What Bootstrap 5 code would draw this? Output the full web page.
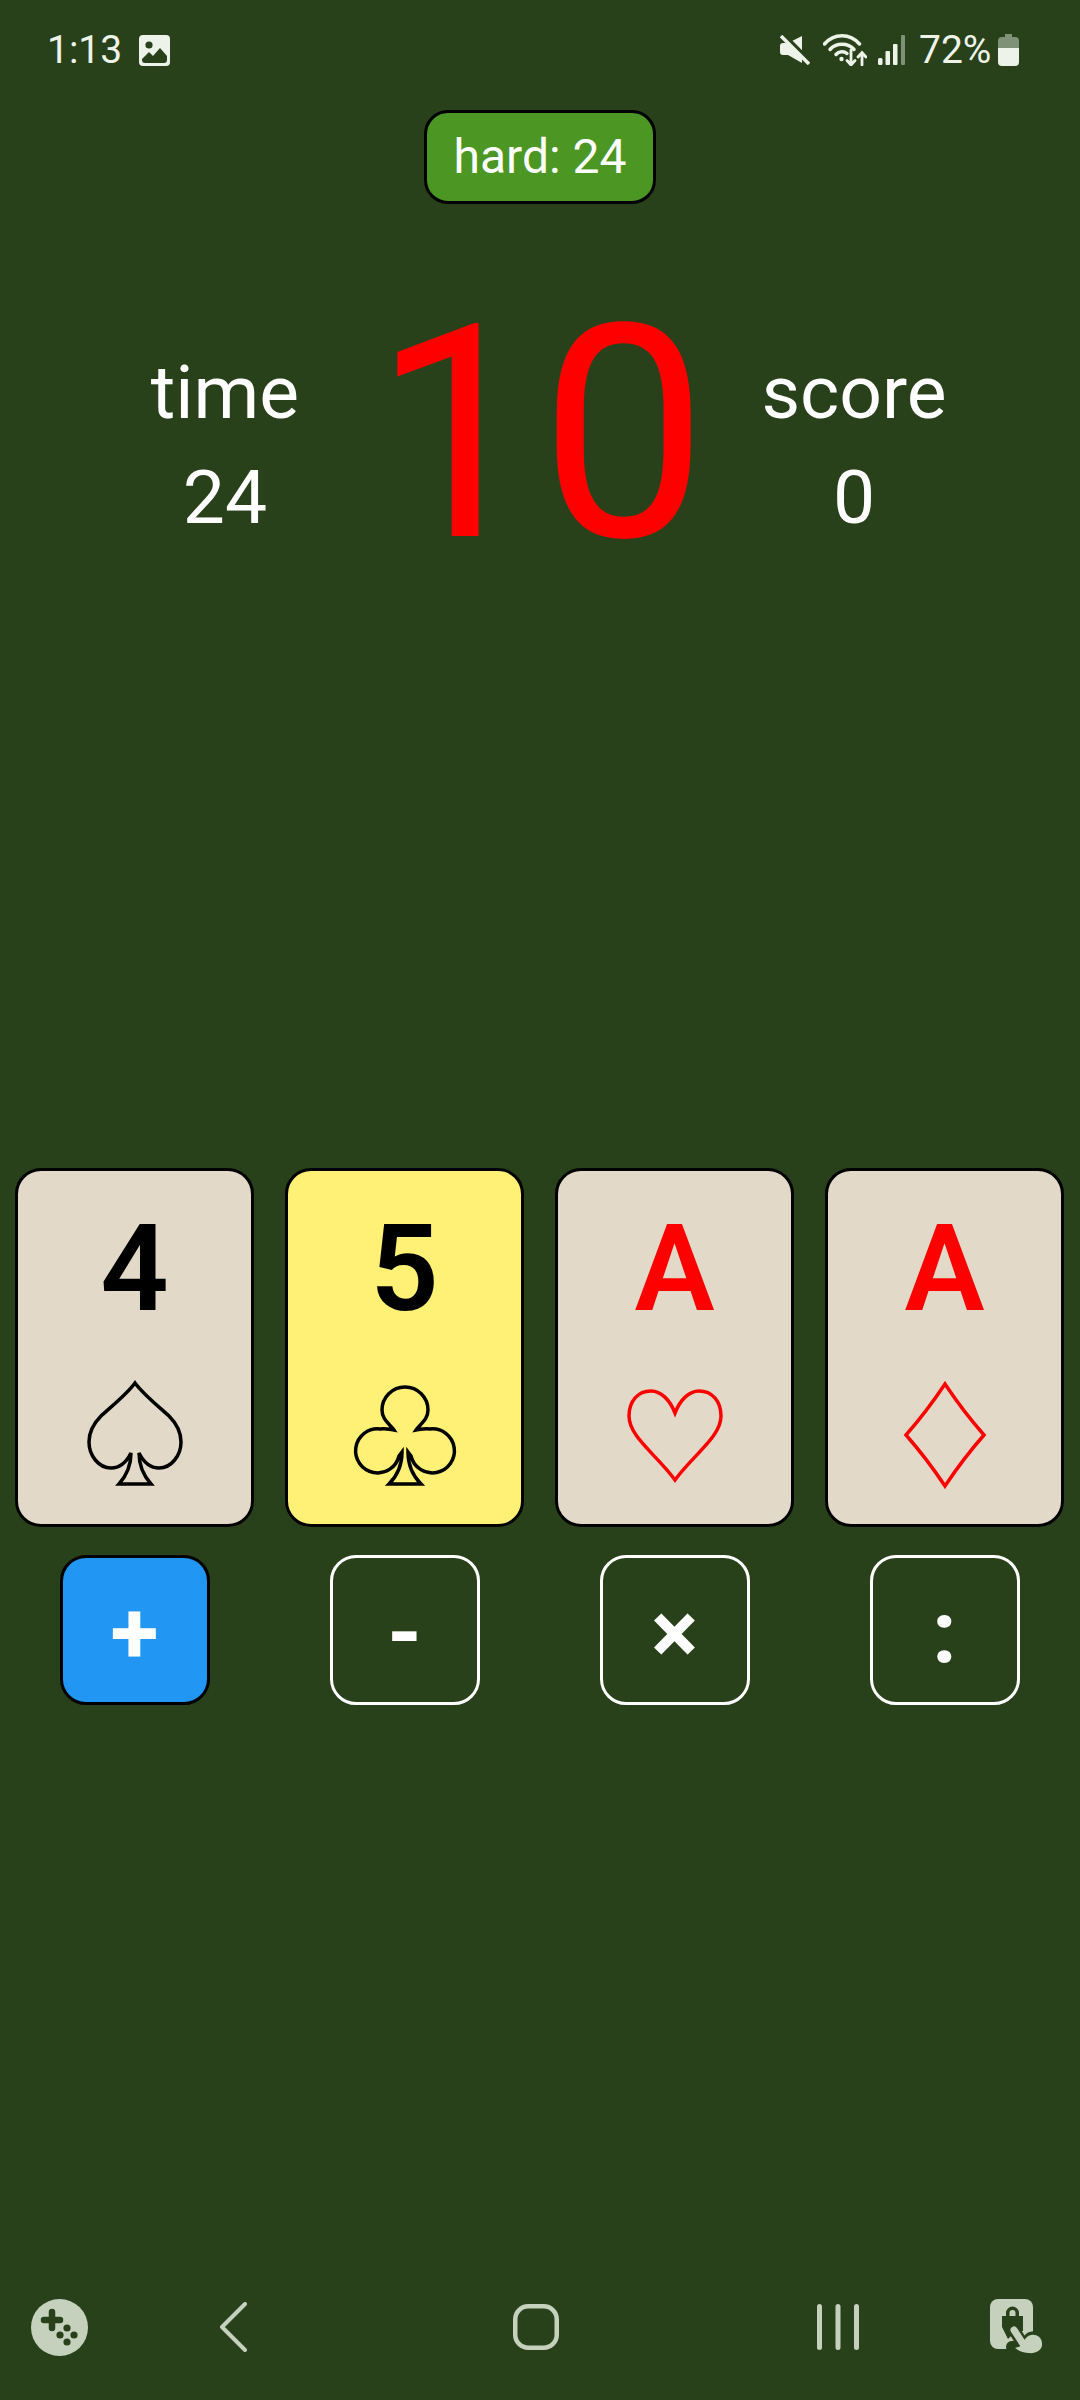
<!DOCTYPE html>
<html lang="en">
<head>
  <meta charset="UTF-8" />
  <meta name="viewport" content="width=device-width, initial-scale=1" />
  <title>Hard 24</title>
  <link href="https://cdn.jsdelivr.net/npm/bootstrap@5.3.3/dist/css/bootstrap.min.css" rel="stylesheet" />
  <style>
    body {
      background-color: #28411a;
      font-family: Roboto, "Liberation Sans", sans-serif;
      color: #fff;
      height: 2400px;
    }

    /* Android status bar */
    .status-row { height: 100px; padding: 0 61px 0 47px; color: #eef3ea; font-size: 39px; line-height: 1; }
    .status-time { width: 92px; }
    .status-pct { width: 74px; margin-left: 14px; margin-right: 5px; }
    .mute-icon { margin-right: 13px; }
    .signal-icon { margin-left: 11px; }

    .level-pill {
      width: 232px;
      height: 94px;
      margin-top: 10px;
      background-color: #4c9624;
      border: 3px solid #000;
      border-radius: 24px;
      font-size: 48px;
      color: #fff;
    }

    /* time / target / score */
    .stats-grid {
      display: grid;
      grid-template-columns: 270px 360px 268px;
      padding-left: 90px;
      margin-top: 79px;
    }
    .stat-col { padding-top: 57px; text-align: center; font-size: 75px; line-height: 105px; }
    .target-num { color: #f00; font-size: 298px; line-height: 300px; padding-top: 2px; text-align: center; }

    .card-row { display: grid; grid-template-columns: repeat(4, 239px); gap: 31px; padding: 0 15px; margin-top: 583px; }
    .play-card {
      height: 359px;
      background-color: #e2d9c9;
      border: 3px solid #000;
      border-radius: 26px;
      color: #000;
    }
    .play-card.picked { background-color: #fff176; }
    .play-card.red-suit { color: #f00; }
    .card-value { font-size: 120px; font-weight: 600; line-height: 120px; margin-top: 38px; }
    .suit-icon { margin-top: 51px; fill: none; stroke: currentColor; stroke-width: 3.5; }

    .op-row { display: grid; grid-template-columns: repeat(4, 239px); gap: 31px; padding: 0 15px; margin-top: 28px; }
    .op-btn {
      width: 150px;
      height: 150px;
      padding: 6px 0 0;
      border: 3px solid #fff;
      border-radius: 26px;
      color: #fff;
      font-size: 88px;
      font-weight: 700;
      line-height: 1;
    }
    .op-btn.active-op { background-color: #2196f3; border-color: #000; }

    /* Android nav bar */
    .nav-row {
      display: grid;
      grid-template-columns: 119px 229px 375px 230px 127px;
      justify-items: center;
      margin-top: auto;
      margin-bottom: 44px;
      height: 58px;
      align-items: center;
    }
  </style>
</head>
<body class="d-flex flex-column m-0">

  <!-- Status bar -->
  <div class="status-row d-flex align-items-center">
    <span class="status-time">1:13</span>
    <svg width="31" height="31" viewBox="0 0 31 31">
      <rect width="31" height="31" rx="4" fill="#eef3ea" />
      <circle cx="10" cy="10" r="3.600" fill="#28411a" />
      <path d="M3 24 L10 17 L14 21 L21 13 L28 21 V25 a3 3 0 0 1 -3 3 H6 a3 3 0 0 1 -3 -3Z" fill="#28411a" />
    </svg>
    <div class="ms-auto d-flex align-items-center">
      <svg class="mute-icon" width="30" height="30" viewBox="0 0 30 30">
        <path d="M0 11 a3 3 0 0 1 3 -3 h5 L22 1 V28 L8 20 H3 a3 3 0 0 1 -3 -3Z" fill="#eef3ea" />
        <path d="M3 -1 L31 27" stroke="#28411a" stroke-width="4" />
        <path d="M1 1 L29 29" stroke="#eef3ea" stroke-width="3.500" />
      </svg>
      <svg width="44" height="32" viewBox="0 0 44 32" fill="none" stroke="#eef3ea" stroke-linecap="round">
        <path d="M1.500 10 C11 -1 27 -1 36.500 10" stroke-width="3.500" />
        <path d="M7 15.500 C13 8.500 25 8.500 31 15.500" stroke-width="3.500" />
        <path d="M13 20.500 C16 17 21 17 24 19.500" stroke-width="3.500" />
        <circle cx="18.500" cy="25" r="2.200" fill="#eef3ea" stroke="none" />
        <path d="M28 16 V31 M24 26.500 L28 31 L32 26.500" stroke-width="2.800" />
        <path d="M39 31 V19 M35 23 L39 18.500 L43 23" stroke-width="2.800" />
      </svg>
      <svg class="signal-icon" width="27" height="30" viewBox="0 0 27 30">
        <rect x="0" y="23" width="4.500" height="7" rx="1.500" fill="#eef3ea" />
        <rect x="7.500" y="16" width="4.500" height="14" rx="1" fill="#eef3ea" />
        <rect x="15" y="9" width="4.500" height="21" rx="1" fill="#eef3ea" />
        <rect x="23" y="0" width="4" height="30" rx="1" fill="#7f9177" />
      </svg>
      <span class="status-pct">72%</span>
      <svg width="21" height="32" viewBox="0 0 21 32">
        <path d="M7 0 h7 v3 h3 a4 4 0 0 1 4 4 v15 H0 V7 a4 4 0 0 1 4 -4 h3Z" fill="#7f9177" />
        <path d="M0 14 H21 V28 a4 4 0 0 1 -4 4 H4 a4 4 0 0 1 -4 -4Z" fill="#eef3ea" />
      </svg>
    </div>
  </div>

  <!-- Level label -->
  <div class="level-pill align-self-center d-flex align-items-center justify-content-center">hard: 24</div>

  <!-- Time, target, score -->
  <div class="stats-grid">
    <div class="stat-col"><div>time</div><div>24</div></div>
    <div class="target-num">10</div>
    <div class="stat-col"><div>score</div><div>0</div></div>
  </div>

  <!-- Cards -->
  <div class="card-row">
    <div class="play-card d-flex flex-column align-items-center">
      <div class="card-value">4</div>
      <svg class="suit-icon" width="110" height="110" viewBox="0 0 110 110">
        <path d="M55 3 C47 14 32 26 21 36 C13 44 9 52 9 62 C9 76 19 88 31 88 C39 88 46 83 51 73 C51 86 47 95 39 104 L71 104 C63 95 59 86 59 73 C64 83 71 88 79 88 C91 88 101 76 101 62 C101 52 97 44 89 36 C78 26 63 14 55 3Z" />
      </svg>
    </div>
    <div class="play-card picked d-flex flex-column align-items-center">
      <div class="card-value">5</div>
      <svg class="suit-icon" width="110" height="110" viewBox="0 0 110 110">
        <path d="M44 50 C40 44 32 40 32 30 A23 23 0 1 1 78 30 C78 40 70 44 66 50 C72 49 76 48 80 49 A22 22 0 1 1 61 76 L58 72 C58 85 63 96 71 104 L39 104 C47 96 52 85 52 72 L49 76 A22 22 0 1 1 30 49 C34 48 38 49 44 50Z" />
      </svg>
    </div>
    <div class="play-card red-suit d-flex flex-column align-items-center">
      <div class="card-value">A</div>
      <svg class="suit-icon" width="110" height="110" viewBox="0 0 110 110">
        <path d="M55 33 C50 20 41 11 31 11 C18 11 9 21 9 36 C9 57 37 75 55 100 C73 75 101 57 101 36 C101 21 92 11 79 11 C69 11 60 20 55 33Z" />
      </svg>
    </div>
    <div class="play-card red-suit d-flex flex-column align-items-center">
      <div class="card-value">A</div>
      <svg class="suit-icon" width="110" height="110" viewBox="0 0 110 110">
        <path d="M55 4 C67 22 79 38 94 55 C79 72 67 88 55 106 C43 88 31 72 16 55 C31 38 43 22 55 4Z" />
      </svg>
    </div>
  </div>

  <!-- Operators -->
  <div class="op-row">
    <div class="d-flex justify-content-center"><button type="button" class="btn op-btn active-op">+</button></div>
    <div class="d-flex justify-content-center"><button type="button" class="btn op-btn">-</button></div>
    <div class="d-flex justify-content-center"><button type="button" class="btn op-btn">×</button></div>
    <div class="d-flex justify-content-center"><button type="button" class="btn op-btn">:</button></div>
  </div>

  <!-- Nav bar -->
  <div class="nav-row">
    <svg width="57" height="57" viewBox="0 0 57 57">
      <circle cx="28.500" cy="28.500" r="28.500" fill="#c5d1bd" />
      <path d="M21 13 V29 M13 21 H29" stroke="#28411a" stroke-width="6.500" stroke-linecap="round" />
      <circle cx="36" cy="29" r="3.600" fill="#28411a" />
      <circle cx="29" cy="36" r="3.600" fill="#28411a" />
      <circle cx="43" cy="36" r="3.600" fill="#28411a" />
      <circle cx="36" cy="43" r="3.600" fill="#28411a" />
    </svg>
    <svg width="27" height="50" viewBox="0 0 27 50" fill="none" stroke="#c5d1bd" stroke-width="4" stroke-linecap="round" stroke-linejoin="round">
      <path d="M25 2 L2 25 L25 48" />
    </svg>
    <svg width="46" height="46" viewBox="0 0 46 46" fill="none" stroke="#c5d1bd" stroke-width="4.500">
      <rect x="2.250" y="2.250" width="41.500" height="41.500" rx="13" />
    </svg>
    <svg width="42" height="46" viewBox="0 0 42 46" fill="#c5d1bd">
      <rect x="0" y="0" width="5" height="46" rx="2.500" />
      <rect x="18.500" y="0" width="5" height="46" rx="2.500" />
      <rect x="37" y="0" width="5" height="46" rx="2.500" />
    </svg>
    <svg width="54" height="56" viewBox="0 0 54 56">
      <path d="M8 0 H35 a8 8 0 0 1 8 8 V42 a8 8 0 0 1 -8 8 H8 a8 8 0 0 1 -8 -8 V8 a8 8 0 0 1 8 -8Z" fill="#c5d1bd" />
      <path d="M16 17 V14 a6.500 6.500 0 0 1 13 0 V17 H33 V32 H26 L18 40 L12 28 V17Z" fill="#28411a" />
      <path d="M19.500 17 V14 a3 3 0 0 1 6 0 V17Z" fill="#c5d1bd" />
      <path d="M24 31 L34 47 M22 48 L42 50" stroke="#28411a" stroke-width="12" stroke-linecap="round" />
      <path d="M34 41 C38 31 52 32 53 44 C54 52 46 56 38 55 C33 54.500 28 53 24 50Z" fill="#28411a" stroke="#28411a" stroke-width="4" />
      <path d="M24 31 L35 48" stroke="#c5d1bd" stroke-width="7" stroke-linecap="round" />
      <path d="M34 42 C38 33 51 34 52 44 C53 51 46 55 38 54 C33 53.500 29 52 25 49 L34 46Z" fill="#c5d1bd" />
    </svg>
  </div>

</body>
</html>
